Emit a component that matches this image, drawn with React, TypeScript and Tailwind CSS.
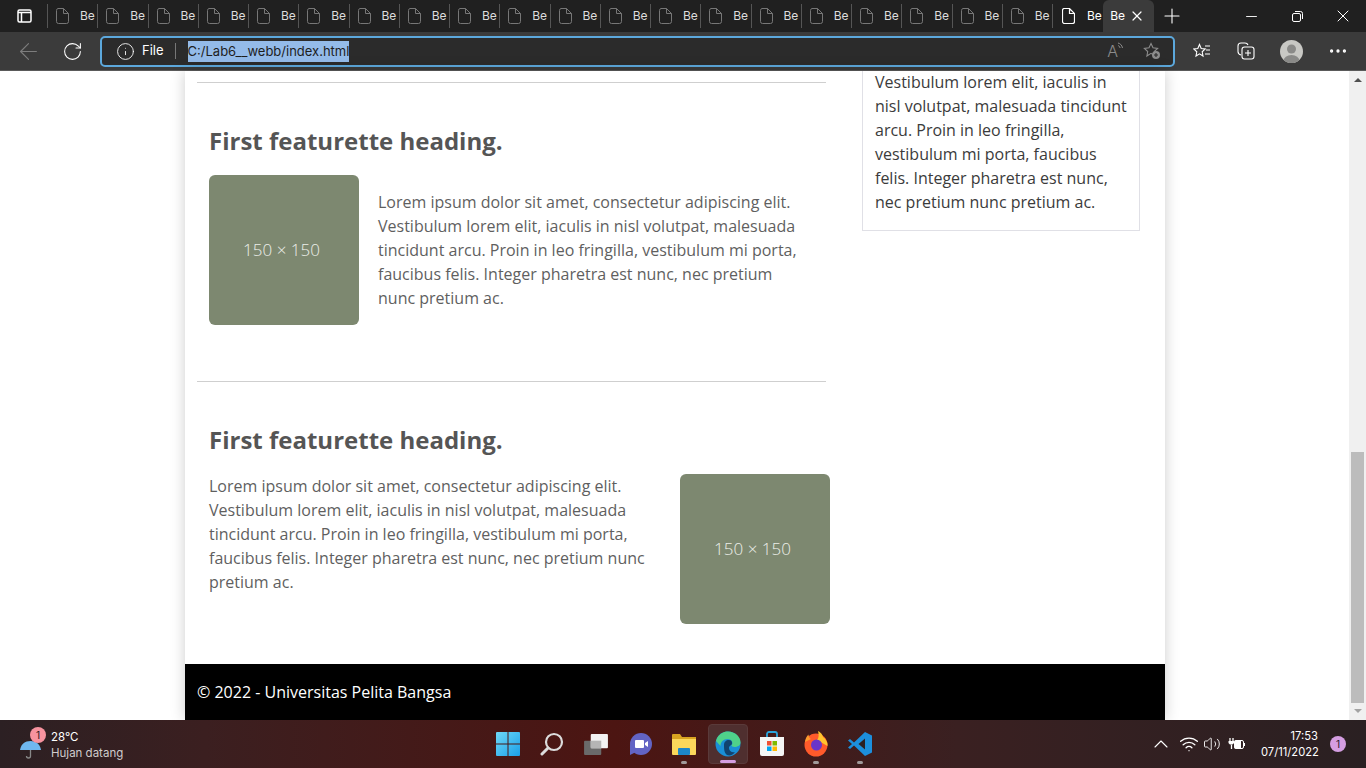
import { ArrowLeft, ChevronUp, Ellipsis, Info, Minus, Plus, RotateCw, Volume2, Wifi, X } from "lucide-react";

const sans = "[font-family:'Open_Sans',sans-serif]";
const ui = "[font-family:'Inter','Noto_Sans',sans-serif]";

function PageIcon({ bright }: { bright?: boolean }) {
  return (
    <svg width="13" height="16" viewBox="0 0 13 16" fill="none" stroke={bright ? "#ffffff" : "#777777"} strokeWidth={bright ? 1.2 : 1}>
      <path d="M2 .5h5.500l5 5V13.500a2 2 0 0 1-2 2H2.500a2 2 0 0 1-2-2V2.500a2 2 0 0 1 1.500-2zM7.500.5v5h5" />
    </svg>
  );
}

function Tab({ bright }: { bright?: boolean }) {
  return (
    <div className={`flex h-8 w-[50.25px] shrink-0 items-center overflow-hidden border-r border-[#555555] last:border-r-0 ${bright ? "pl-[9px]" : "pl-[8px]"}`}>
      <PageIcon bright={bright} />
      <span className={`text-[12px] ${bright ? "ml-[12px] text-white" : "ml-[11px] text-[#dddddd]"}`}>Be</span>
    </div>
  );
}

function Placeholder() {
  return (
    <div className="flex size-[150px] shrink-0 items-center justify-center rounded-[6px] bg-[#7d8870] pr-[5px] text-[17px] font-light text-[#eceee8]">
      150 × 150
    </div>
  );
}

function Featurette({ reverse }: { reverse?: boolean }) {
  const text = (
    <p className={`shrink-0 text-[16px] leading-[24px] text-[#5f5f5f] ${reverse ? "w-[440px]" : "w-[425px]"}`}>
      Lorem ipsum dolor sit amet, consectetur adipiscing elit. Vestibulum lorem elit, iaculis in nisl volutpat,
      malesuada tincidunt arcu. Proin in leo fringilla, vestibulum mi porta, faucibus felis. Integer pharetra est nunc,
      nec pretium nunc pretium ac.
    </p>
  );
  return (
    <section className="border-t border-[#cfcfcf] pl-3 pt-[42px]">
      <h2 className="text-[24px] leading-[32px] font-bold text-[#555555]">First featurette heading.</h2>
      <div className="mt-[18px] flex items-start">
        {reverse ? (
          <>
            {text}
            <div className="ml-[31px] shrink-0">
              <Placeholder />
            </div>
          </>
        ) : (
          <>
            <Placeholder />
            <div className="ml-[19px] pt-[15px]">{text}</div>
          </>
        )}
      </div>
    </section>
  );
}

function TaskIcon({ children, active, dot }: { children: React.ReactNode; active?: boolean; dot?: boolean }) {
  return (
    <div
      className={`relative mr-[4px] flex h-[40px] w-[40px] shrink-0 items-center justify-center rounded-[4px] ${
        active ? "border border-[#5a3a3a] bg-[#4f2f2f]" : ""
      }`}
    >
      {children}
      {active ? <span className="absolute bottom-0 h-[3px] w-[16px] rounded-full bg-[#d59ee2]" /> : null}
      {dot ? <span className="absolute bottom-0 h-[3px] w-[6px] rounded-full bg-[#a09a9a]" /> : null}
    </div>
  );
}

export default function App() {
  return (
    <div className={`flex h-[768px] w-[1366px] flex-col overflow-hidden bg-white ${ui}`}>
      {/* title bar with the tabs */}
      <header className="flex h-8 shrink-0 items-center bg-[#202020] text-white">
        <div className="flex h-8 w-[47px] shrink-0 items-center pl-[17px]">
          <svg width="15" height="14" viewBox="0 0 15 14" fill="none" stroke="#ffffff" strokeWidth="1.500">
            <rect x="1" y="1" width="13" height="12" rx="1.500" />
            <path d="M1 3.500h13M4.500 3.500V13" />
          </svg>
        </div>
        <div className="flex h-[24px] items-center overflow-hidden border-l border-[#555555]">
          {Array.from({ length: 20 }).map((_, i) => (
            <Tab key={i} />
          ))}
          <Tab bright />
        </div>
        <div className="flex h-8 w-[51px] shrink-0 items-center rounded-t-[6px] bg-[#3b3b3b] pl-[7px]">
          <span className="text-[12px] text-white">Be</span>
          <X className="ml-[4px] size-[16px]" strokeWidth={1.800} />
        </div>
        <Plus className="ml-[6px] size-[24px]" strokeWidth={1.100} />
        <div className="ml-auto flex items-center">
          <div className="flex w-[46px] justify-center">
            <Minus className="size-[17px]" strokeWidth={1.300} />
          </div>
          <div className="flex w-[46px] justify-center">
            <svg width="11" height="11" viewBox="0 0 11 11" fill="none" stroke="#ffffff">
              <rect x=".5" y="2.500" width="8" height="8" rx="1.500" />
              <path d="M3 .5h5.500a2 2 0 0 1 2 2V8" />
            </svg>
          </div>
          <div className="flex w-[46px] justify-center">
            <X className="size-[20px]" strokeWidth={1.200} />
          </div>
        </div>
      </header>

      {/* address bar */}
      <div className="flex h-[39px] shrink-0 items-center border-b border-[#5a5a5a] bg-[#3b3b3b] text-white">
        <div className="flex w-[100px] shrink-0 items-center">
          <ArrowLeft className="ml-[15px] size-[27px] text-[#7d7d7d]" strokeWidth={1} />
          <RotateCw className="ml-[20px] size-[21px] text-white" strokeWidth={1.200} />
        </div>
        <div className="flex h-[31px] w-[1075px] shrink-0 items-center rounded-[5px] border-2 border-[#5ca8dc] bg-[#2b2b2b] pl-[14px]">
          <Info className="size-[19px]" strokeWidth={1.100} />
          <span className="ml-[7px] text-[13px]">File</span>
          <span className="ml-[11px] h-[16px] w-px bg-[#777777]" />
          <span className="ml-[12px] bg-[#94bbe9] text-[13px] leading-[21px] text-[#1e1e1e]">C:/Lab6__webb/index.html</span>
          <div className="ml-auto flex items-center pr-[12px] text-[#8c8c8c]">
            <span className="relative text-[16px] leading-none font-light">
              A
              <svg className="absolute -top-[1px] -right-[6px]" width="7" height="8" viewBox="0 0 7 8" fill="none" stroke="#8c8c8c">
                <path d="M1 1c2 .5 4 2 4.500 5M1 3.500C2 4 3 4.500 3 6" />
              </svg>
            </span>
            <svg className="ml-[25px]" width="18" height="18" viewBox="0 0 18 18" fill="none" stroke="#8c8c8c" strokeWidth="1.100">
              <path d="M8 1.500l2 4.300 4.600.6-3.300 3.100.8 4.500L8 11.300l-4.100 2.700.8-4.500L1.400 6.400 6 5.800z" />
              <circle cx="13" cy="13" r="4" fill="#8c8c8c" stroke="none" />
              <path d="M13 11v4M11 13h4" stroke="#2b2b2b" />
            </svg>
          </div>
        </div>
        <svg className="ml-[18px]" width="18" height="17" viewBox="0 0 18 17" fill="none" stroke="#ffffff" strokeWidth="1.100">
          <path d="M6.500 1.500l1.700 4 4 .5-3 2.800.8 4.200-3.500-2.200-3.500 2.200.8-4.200-3-2.800 4-.5z" />
          <path d="M12 3h5M13 7h4M12 11h5" />
        </svg>
        <svg className="ml-[26px]" width="18" height="18" viewBox="0 0 18 18" fill="none" stroke="#ffffff" strokeWidth="1.100">
          <path d="M4 13C2 12.500 1 11 1 9.500V4a3 3 0 0 1 3-3h4c1.500 0 2.500.5 3 2" />
          <rect x="5" y="5" width="12" height="12" rx="2.500" />
          <path d="M11 8v6M8 11h6" />
        </svg>
        <div className="ml-[25px] flex size-[23px] items-center justify-center overflow-hidden rounded-full bg-[#c8c8c4]">
          <svg width="23" height="23" viewBox="0 0 23 23">
            <circle cx="11.500" cy="9" r="4.500" fill="#8a8a88" />
            <ellipse cx="11.500" cy="21" rx="8" ry="6" fill="#8a8a88" />
          </svg>
        </div>
        <Ellipsis className="ml-[24px] size-[22px]" strokeWidth={1.600} />
      </div>

      {/* page with its scrollbar */}
      <div className="flex min-h-0 flex-1">
        <main className={`flex min-w-0 flex-1 justify-center pl-px ${sans}`}>
          <div className="flex h-[649px] w-[980px] flex-col overflow-hidden bg-white shadow-[0_0_14px_rgba(0,0,0,0.2)]">
            <div className="flex min-h-0 flex-1 pl-3">
              <div className="w-[629px] shrink-0 pt-[11px]">
                <Featurette />
                <div className="mt-[56px]">
                  <Featurette reverse />
                </div>
              </div>
              <aside className="ml-[36px] h-[160px] w-[278px] shrink-0 border-x border-b border-[#e0e0e6] px-3 text-[16px] leading-[24px] text-[#3b3b3b]">
                <p className="-mt-px whitespace-nowrap">
                  Vestibulum lorem elit, iaculis in
                  <br />
                  nisl volutpat, malesuada tincidunt
                  <br />
                  arcu. Proin in leo fringilla,
                  <br />
                  vestibulum mi porta, faucibus
                  <br />
                  felis. Integer pharetra est nunc,
                  <br />
                  nec pretium nunc pretium ac.
                </p>
              </aside>
            </div>
            <footer className="flex h-[56px] shrink-0 items-center bg-black pl-3 text-[16px] text-white">
              © 2022 - Universitas Pelita Bangsa
            </footer>
          </div>
        </main>
        <div className="flex w-[17px] shrink-0 flex-col items-center bg-[#f0f0f0]">
          <span className="mt-[7px] h-0 w-0 border-x-[4px] border-b-[4px] border-x-transparent border-b-[#505050]" />
          <div className="mt-[370px] h-[251px] w-[13px] bg-[#bcbcbc]" />
          <span className="mt-[6px] h-0 w-0 border-x-[4px] border-t-[4px] border-x-transparent border-t-[#a3a3a3]" />
        </div>
      </div>

      {/* windows taskbar */}
      <footer className="relative flex h-[48px] shrink-0 items-center justify-between bg-[linear-gradient(90deg,#2c2023_0%,#3b1f20_15%,#4c1512_45%,#3a2021_70%,#2a2022_100%)] text-white">
        <div className="flex items-center pl-[20px]">
          <div className="relative h-[24px] w-[31px]">
            <svg className="absolute top-[7px] left-0" width="22" height="20" viewBox="0 0 22 20">
              <path d="M0 11C1 5 5 2 10.500 2S20 5 21 11z" fill="#6fb7ef" />
              <path d="M10.500 11v6a2 2 0 0 1-4 0" fill="none" stroke="#888888" strokeWidth="1.300" />
            </svg>
            <span className="absolute -top-[5px] left-[10px] flex size-[16px] items-center justify-center rounded-full bg-[#f7939f] text-[10px] text-[#2a1a1a]">
              1
            </span>
          </div>
          <div className="mt-px text-[11.500px] leading-[16px]">
            <div>28°C</div>
            <div className="text-[#d0cccc]">Hujan datang</div>
          </div>
        </div>
        <div className="absolute top-0 left-[488px] flex h-[48px] items-center">
          <TaskIcon>
            <svg width="24" height="24" viewBox="0 0 24 24">
              <defs>
                <linearGradient id="win" x1="0" y1="0" x2="1" y2="1">
                  <stop offset="0" stopColor="#6fd8f7" />
                  <stop offset="1" stopColor="#1a9fe8" />
                </linearGradient>
              </defs>
              <path d="M0 1a1 1 0 0 1 1-1h10.500v11.500H0zM12.500 0H23a1 1 0 0 1 1 1v10.500H12.500zM0 12.500h11.500V24H1a1 1 0 0 1-1-1zM12.500 12.500H24V23a1 1 0 0 1-1 1H12.500z" fill="url(#win)" />
            </svg>
          </TaskIcon>
          <TaskIcon>
            <svg width="24" height="24" viewBox="0 0 24 24" fill="none" stroke="#dcdcdc">
              <circle cx="14" cy="10" r="8" strokeWidth="2.200" />
              <path d="M8 16l-6 6" strokeWidth="3" strokeLinecap="round" />
            </svg>
          </TaskIcon>
          <TaskIcon>
            <svg width="24" height="21" viewBox="0 0 25 22">
              <rect y="7" width="18" height="15" rx="1" fill="#6a6a6a" />
              <rect x="7" width="18" height="15" rx="1" fill="#f2f2f2" />
              <rect x="7" y="7" width="11" height="8" fill="#b5b5b5" />
            </svg>
          </TaskIcon>
          <TaskIcon>
            <svg width="24" height="24" viewBox="0 0 24 24">
              <circle cx="13" cy="12" r="11" fill="#6264c4" />
              <path d="M2 12v11l6-3z" fill="#6264c4" />
              <rect x="7" y="8" width="9" height="8" rx="1" fill="#ffffff" />
              <path d="M17 11l3-2v6l-3-2z" fill="#ffffff" />
            </svg>
          </TaskIcon>
          <TaskIcon dot>
            <svg width="24" height="24" viewBox="0 0 24 24">
              <path d="M0 3a1 1 0 0 1 1-1h7l2 3h14v4H0z" fill="#d9a421" />
              <path d="M0 7h24v15a1 1 0 0 1-1 1H1a1 1 0 0 1-1-1z" fill="#fbd75b" />
              <rect x="6" y="16" width="12" height="7" rx="1" fill="#1c86c9" />
            </svg>
          </TaskIcon>
          <TaskIcon active>
            <svg width="26" height="26" viewBox="0 0 26 26">
              <circle cx="13" cy="13" r="12.500" fill="#1a8fd6" />
              <path d="M1 10C3 3 8 .5 13 .5c7 0 12.500 5 12.500 11 0 3-3 4.500-6 4.500-2 0-3-1-3-2 2-1 1-6-4-6-4 0-7 3-7 7z" fill="#4fd18a" />
              <path d="M9 14c0-3 2-5 5-5 2 0 3 1 3 3 0 3-3 2-3 5 0 3 3 5 6 4-2 3-5 4-8 3-3-2-3-7-3-10z" fill="#11436f" />
            </svg>
          </TaskIcon>
          <TaskIcon>
            <svg width="24" height="26" viewBox="0 0 24 26">
              <path d="M7 6V3a2 2 0 0 1 2-2h6a2 2 0 0 1 2 2v3" fill="none" stroke="#29a5dd" strokeWidth="1.800" />
              <path d="M0 6h24v17a2 2 0 0 1-2 2H2a2 2 0 0 1-2-2z" fill="#f5f5f5" />
              <rect x="7" y="10" width="4.500" height="4.500" fill="#f05033" />
              <rect x="12.500" y="10" width="4.500" height="4.500" fill="#7fba00" />
              <rect x="7" y="15.500" width="4.500" height="4.500" fill="#00a4ef" />
              <rect x="12.500" y="15.500" width="4.500" height="4.500" fill="#ffb900" />
            </svg>
          </TaskIcon>
          <TaskIcon dot>
            <svg width="24" height="26" viewBox="0 0 24 26">
              <circle cx="12" cy="14" r="11.500" fill="#ff5a2b" />
              <path d="M14 0c4 2 5 5 5 6 3 2 5 6 4.500 9L13 9c2-2 2-6 1-9z" fill="#ffc42e" />
              <path d="M1 11c.5-4 2-6 3.500-7.500 0 2 1 3.500 2.500 4.500z" fill="#ff9a2e" />
              <circle cx="12.500" cy="14" r="5.500" fill="#6a35c9" />
            </svg>
          </TaskIcon>
          <TaskIcon dot>
            <svg width="24" height="24" viewBox="0 0 24 24">
              <path d="M17 0l7 3.500v17L17 24 6 13.500 2 17 0 15.500 4 12 0 8.500 2 7l4 3.500z" fill="#1c8fdc" />
              <path d="M17 6.500L10.500 12l6.500 5.500z" fill="#2c2022" />
            </svg>
          </TaskIcon>
        </div>
        <div className="flex items-center pr-[20px]">
          <ChevronUp className="size-[24px]" strokeWidth={1.100} />
          <Wifi className="ml-[6px] size-[20px]" strokeWidth={1.600} />
          <Volume2 className="ml-[4px] size-[18px]" strokeWidth={1.200} />
          <svg className="ml-[7px]" width="17" height="14" viewBox="0 0 17 14">
            <path d="M2 1v3M5 1v3M3.500 8v4" stroke="#ffffff" fill="none" strokeWidth="1.300" />
            <path d="M.5 4h5.500v2a3 3 0 0 1-5.500 0z" fill="#ffffff" />
            <rect x="6.500" y="3.500" width="9" height="8" rx="1.500" fill="none" stroke="#ffffff" />
            <rect x="6.500" y="3.500" width="6.500" height="8" fill="#ffffff" />
            <rect x="16" y="6" width="1" height="3" fill="#ffffff" />
          </svg>
          <div className="ml-[16px] w-[57px] text-right text-[11.200px] leading-[16px]">
            <div>17:53</div>
            <div>07/11/2022</div>
          </div>
          <span className="ml-[12px] flex size-[16px] items-center justify-center rounded-full bg-[#d59ee2] text-[10px] text-[#2a1a2a]">
            1
          </span>
        </div>
      </footer>
    </div>
  );
}
